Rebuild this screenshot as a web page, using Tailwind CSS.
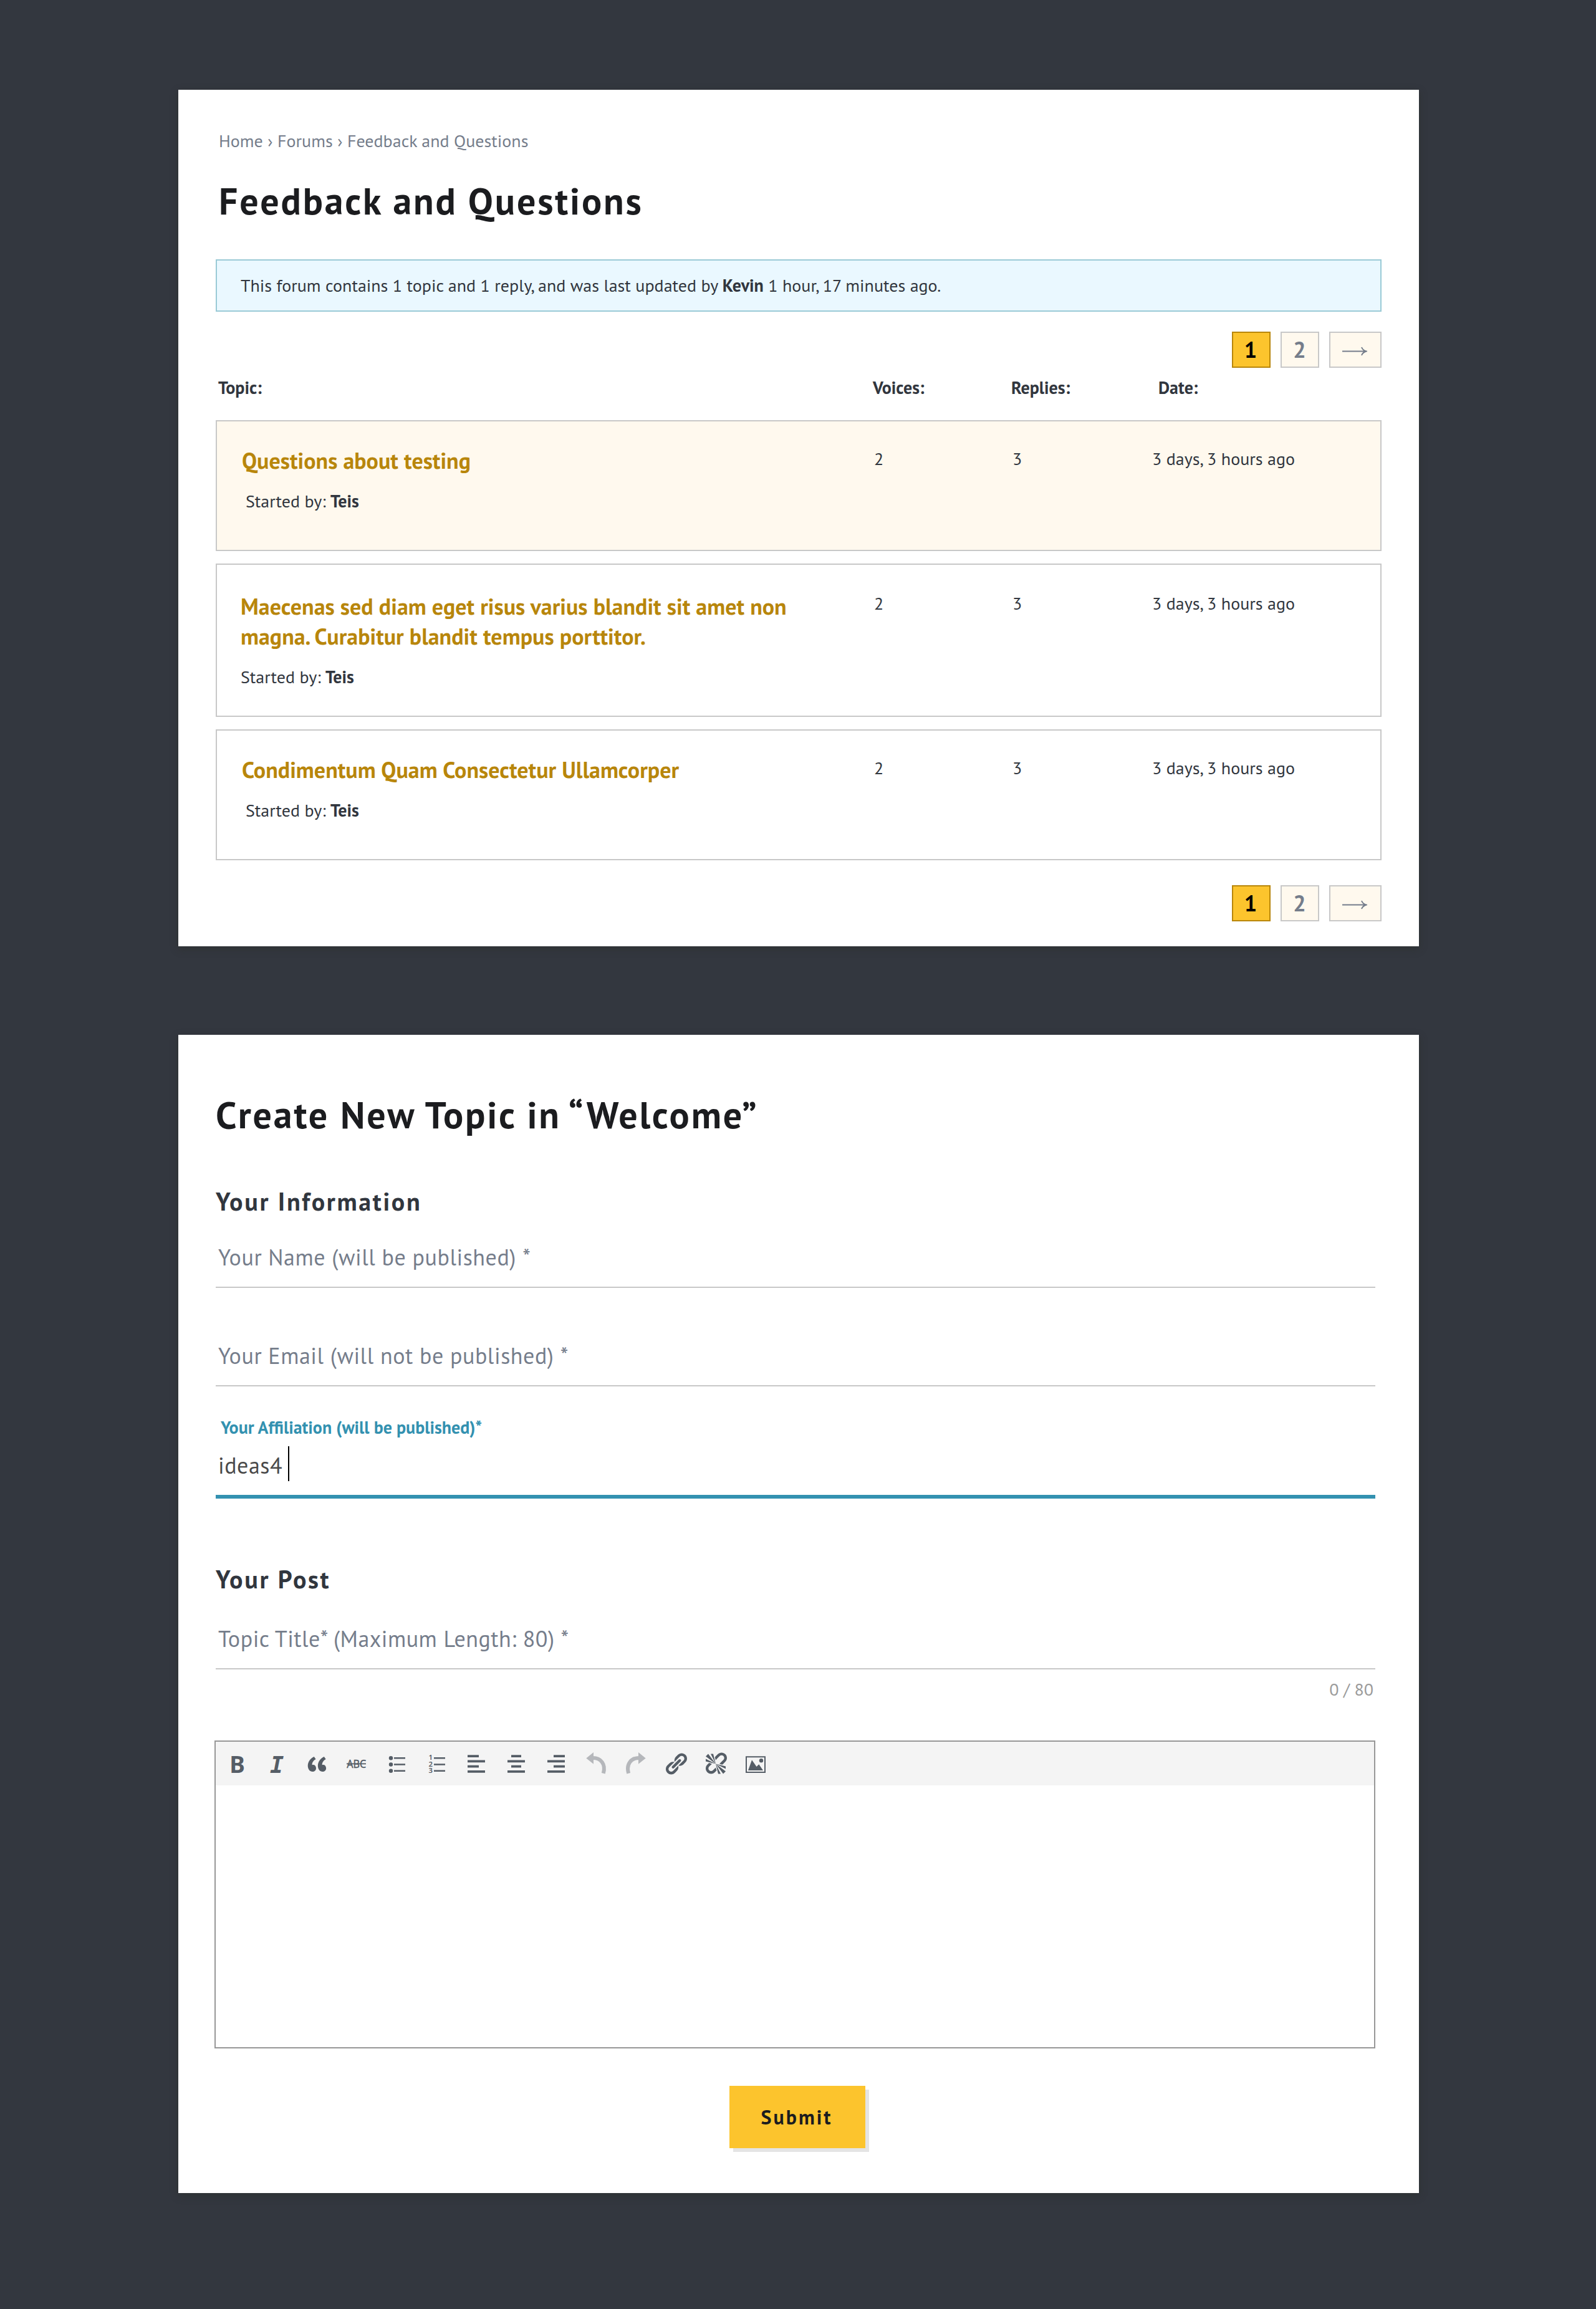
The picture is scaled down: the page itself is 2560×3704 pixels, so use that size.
<!DOCTYPE html>
<html lang="en">
<head>
<meta charset="utf-8">
<title>Feedback and Questions</title>
<script src="https://cdn.jsdelivr.net/npm/@tailwindcss/browser@4"></script>
</head>
<body class="bg-[#33373f] w-[2560px] h-[3704px] pt-36 pl-[286px] font-['PT_Sans','Noto_Sans',sans-serif] text-[28px] leading-10 text-[#31363e]">

<section class="w-[1990px] h-[1374px] bg-white px-[60px] pt-[62px] shadow-[0_4px_12px_rgba(40,44,36,0.4)]">
  <nav class="pl-[5px] text-[#757d8b]">Home › Forums › Feedback and Questions</nav>
  <h1 class="mt-10 pl-[5px] text-[60px] leading-[72px] font-bold tracking-[2.8px] text-[#1b1c1f]">Feedback and Questions</h1>

  <p class="mt-[58px] h-[84px] flex items-center pl-[38px] border-2 border-[#9acad6] bg-[#eaf8ff] whitespace-pre">This forum contains 1 topic and 1 reply, and was last updated by <b>Kevin</b> 1 hour, 17 minutes ago.</p>

  <nav class="mt-8 flex justify-end gap-4 text-[36px] font-bold">
    <span class="w-[62px] h-[58px] pr-[2px] flex items-center justify-center border-2 border-[#b8860b] bg-[#fcc42d] text-black">1</span>
    <span class="w-[62px] h-[58px] pr-px flex items-center justify-center border-2 border-[#c8c8c8] bg-[#fff9ee] text-[#757d8b]">2</span>
    <span class="w-[84px] h-[58px] pr-[2px] flex items-center justify-center border-2 border-[#c8c8c8] bg-[#fff9ee]">
      <svg class="w-10 h-5" viewBox="0 0 40 20" fill="none" stroke="#757d8b" stroke-width="2"><path d="M0 12.500H38M31 6Q33 11 38.500 12.500Q33 14 31 19"/></svg>
    </span>
  </nav>

  <div class="mt-3 pl-1 grid grid-cols-[1050px_222px_236px_1fr] font-bold">
    <span>Topic:</span><span>Voices:</span><span>Replies:</span><span>Date:</span>
  </div>

  <div class="mt-8 flex flex-col gap-5">
    <article class="h-[210px] border-2 border-[#c8c8c8] bg-[#fff9ee] pl-10 grid grid-cols-[1014px_222px_224px_1fr]">
      <div class="pt-[39px]">
        <h2 class="text-[36px] leading-[48px] font-bold text-[#b8860b]">Questions about testing</h2>
        <p class="mt-[21px] pl-[6px]">Started by: <b>Teis</b></p>
      </div>
      <span class="pt-10">2</span><span class="pt-10">3</span><span class="pt-10">3 days, 3 hours ago</span>
    </article>
    <article class="h-[246px] border-2 border-[#c8c8c8] pl-[38px] grid grid-cols-[1016px_222px_224px_1fr]">
      <div class="pt-[43px]">
        <h2 class="text-[36px] leading-[48px] font-bold text-[#b8860b]">Maecenas sed diam eget risus varius blandit sit amet non<br>magna. Curabitur blandit tempus porttitor.</h2>
        <p class="mt-[21px]">Started by: <b>Teis</b></p>
      </div>
      <span class="pt-[42px]">2</span><span class="pt-[42px]">3</span><span class="pt-[42px]">3 days, 3 hours ago</span>
    </article>
    <article class="h-[210px] border-2 border-[#c8c8c8] pl-10 grid grid-cols-[1014px_222px_224px_1fr]">
      <div class="pt-[39px]">
        <h2 class="text-[36px] leading-[48px] font-bold text-[#b8860b]">Condimentum Quam Consectetur Ullamcorper</h2>
        <p class="mt-[21px] pl-[6px]">Started by: <b>Teis</b></p>
      </div>
      <span class="pt-10">2</span><span class="pt-10">3</span><span class="pt-10">3 days, 3 hours ago</span>
    </article>
  </div>

  <nav class="mt-10 flex justify-end gap-4 text-[36px] font-bold">
    <span class="w-[62px] h-[58px] pr-[2px] flex items-center justify-center border-2 border-[#b8860b] bg-[#fcc42d] text-black">1</span>
    <span class="w-[62px] h-[58px] pr-px flex items-center justify-center border-2 border-[#c8c8c8] bg-[#fff9ee] text-[#757d8b]">2</span>
    <span class="w-[84px] h-[58px] pr-[2px] flex items-center justify-center border-2 border-[#c8c8c8] bg-[#fff9ee]">
      <svg class="w-10 h-5" viewBox="0 0 40 20" fill="none" stroke="#757d8b" stroke-width="2"><path d="M0 12.500H38M31 6Q33 11 38.500 12.500Q33 14 31 19"/></svg>
    </span>
  </nav>
</section>

<section class="mt-[142px] w-[1990px] h-[1858px] bg-white pl-[60px] pr-[70px] pt-[92px] shadow-[0_4px_12px_rgba(40,44,36,0.4)]">
  <h1 class="text-[60px] leading-[72px] font-bold tracking-[2.8px] text-[#1b1c1f]">Create New Topic in <span class="-ml-[6px]">“</span>Welcome”</h1>

  <h2 class="mt-[79px] text-[40px] leading-[48px] font-bold tracking-[2.65px]">Your Information</h2>
  <div class="mt-[42px] pl-1 pb-[23px] border-b-2 border-[#c8c8c8] text-[36px] leading-[48px] tracking-[0.55px] text-[#757d8b]">Your Name (will be published) *</div>
  <div class="mt-[85px] pl-1 pb-[23px] border-b-2 border-[#c8c8c8] text-[36px] leading-[48px] tracking-[0.55px] text-[#757d8b]">Your Email (will not be published) *</div>
  <label class="block mt-[46px] pl-2 font-bold text-[#3391b0]">Your Affiliation (will be published)*</label>
  <div class="mt-[17px] pl-1 pb-[23px] border-b-6 border-[#3391b0] relative text-[36px] leading-[48px] tracking-[0.55px] text-[#4a4a4a]">ideas4<i class="absolute left-[116px] -top-[7px] w-[2px] h-14 bg-black"></i></div>

  <h2 class="mt-[105px] text-[40px] leading-[48px] font-bold tracking-[2.65px]">Your Post</h2>
  <div class="mt-[48px] pl-1 pb-[23px] border-b-2 border-[#c8c8c8] text-[36px] leading-[48px] tracking-[0.5px] text-[#757d8b]">Topic Title* (Maximum Length: 80) *</div>
  <p class="mt-3 pr-[3px] text-right text-[#9b9b9b]">0 / 80</p>

  <div class="mt-[62px] -ml-[2px] h-[494px] border-2 border-[#979797]">
    <div class="h-[70px] bg-[#f4f4f4] pl-[14px] pt-4 flex gap-6 text-[#555d66]">
      <svg class="w-10 h-10 overflow-visible" viewBox="0 0 40 40" fill="currentColor"><text x="8.300" y="34.300" font-size="37" font-weight="700" font-family="Noto Sans">B</text></svg>
      <svg class="w-10 h-10 overflow-visible" viewBox="0 0 40 40" fill="currentColor"><text x="9" y="34.300" font-size="37" font-weight="700" font-style="italic" font-family="DejaVu Sans Mono">I</text></svg>
      <svg class="w-10 h-10" viewBox="0 0 20 20" fill="currentColor"><path d="M9.490 13.220c0-.74-.2-1.380-.61-1.900-.62-.78-1.830-.88-2.530-.72-.29-1.650 1.110-3.750 2.920-4.650L7.880 4c-2.730 1.300-5.420 4.280-4.960 8.050C3.210 14.430 4.590 16 6.540 16c.85 0 1.560-.25 2.120-.75s.83-1.180.83-2.030zm8.050 0c0-.74-.2-1.380-.61-1.900-.63-.78-1.830-.88-2.530-.72-.29-1.650 1.110-3.750 2.920-4.650L15.930 4c-2.730 1.300-5.410 4.280-4.950 8.050.28 2.380 1.660 3.950 3.610 3.950.85 0 1.560-.25 2.120-.75s.83-1.180.83-2.030z"/></svg>
      <svg class="w-10 h-10" viewBox="0 0 40 40" fill="currentColor"><text x="4.300" y="25.700" font-size="17.500" textLength="31" lengthAdjust="spacingAndGlyphs" stroke="currentColor" stroke-width=".4" font-family="Noto Sans">ABC</text><path d="M4 18.500h31v1.800H4z"/></svg>
      <svg class="w-10 h-10" viewBox="0 0 40 40" fill="currentColor"><circle cx="11" cy="10.300" r="3.200"/><circle cx="11" cy="20.500" r="3.200"/><circle cx="11" cy="30.700" r="3.200"/><path d="M16 9h18v2.600H16zM16 19.200h18v2.600H16zM16 29.400h18v2.600H16z"/></svg>
      <svg class="w-10 h-10" viewBox="0 0 40 40" fill="currentColor" font-family="Noto Sans" font-weight="600" font-size="11.300"><text x="7.500" y="13.400">1</text><text x="7.500" y="23.800">2</text><text x="7.500" y="34">3</text><path d="M16 9h18v2.600H16zM16 19.200h18v2.600H16zM16 29.400h18v2.600H16z"/></svg>
      <svg class="w-10 h-10" viewBox="0 0 40 40" fill="currentColor"><path d="M6 5.300h18v3.700H6zM6 13.500h28v3.700H6zM6 21.700h18v3.700H6zM6 30h28v3.700H6z"/></svg>
      <svg class="w-10 h-10" viewBox="0 0 40 40" fill="currentColor"><path d="M12 5.300h16v3.700H12zM6 13.500h28v3.700H6zM12 21.700h16v3.700H12zM6 30h28v3.700H6z"/></svg>
      <svg class="w-10 h-10" viewBox="0 0 40 40" fill="currentColor"><path d="M16 5.300h18v3.700H16zM6 13.500h28v3.700H6zM16 21.700h18v3.700H16zM6 30h28v3.700H6z"/></svg>
      <svg class="w-10 h-10 text-[#b5b7bb]" viewBox="0 0 40 40"><path d="M4.300 10.500L16 1V19.700z" fill="currentColor"/><path d="M14 10C28 9.500 36 20 31.800 34.700" fill="none" stroke="currentColor" stroke-width="6"/></svg>
      <svg class="w-10 h-10 text-[#b5b7bb]" viewBox="0 0 40 40"><path d="M35.700 10.500L24 1V19.700z" fill="currentColor"/><path d="M26 10C12 9.500 4 20 8.200 34.700" fill="none" stroke="currentColor" stroke-width="6"/></svg>
      <svg class="w-10 h-10" viewBox="0 0 20 20" fill="currentColor"><path d="M17.740 2.260c1.680 1.690 1.680 4.410 0 6.100l-1.530 1.520c-1.120 1.120-2.700 1.470-4.140 1.090l2.620-2.610.76-.77.76-.76c.84-.84.84-2.200 0-3.040-.84-.85-2.200-.85-3.040 0l-.77.76-3.380 3.380c-.37-1.440-.02-3.020 1.100-4.140l1.520-1.530c1.690-1.680 4.420-1.680 6.100 0zM8.590 12.930l5.340-5.340c.42-.42.42-1.100 0-1.520-.44-.43-1.130-.39-1.530 0l-5.330 5.340c-.42.42-.42 1.100 0 1.520.44.43 1.130.39 1.520 0zm-.76 2.290l4.140-4.150c.38 1.440.03 3.020-1.090 4.140l-1.520 1.530c-1.690 1.680-4.410 1.680-6.100 0-1.680-1.680-1.680-4.420 0-6.100l1.530-1.520c1.120-1.120 2.700-1.470 4.140-1.100l-4.140 4.150c-.85.84-.85 2.200 0 3.050.84.84 2.200.84 3.040 0z" transform="translate(0 .2)"/></svg>
      <svg class="w-10 h-10" viewBox="0 0 20 20" fill="currentColor"><path d="M17.740 2.260c1.680 1.690 1.680 4.410 0 6.100l-1.530 1.520c-.32.33-.69.58-1.080.77L13 10l1.690-1.640.76-.77.76-.76c.84-.84.84-2.200 0-3.040-.84-.85-2.200-.85-3.040 0l-.77.76-.76.76L10 7l-.65-2.140c.19-.38.44-.75.77-1.070l1.520-1.530c1.690-1.680 4.420-1.680 6.100 0zM2 4l8 6-6-8zm4-2l4 8-2-8H6zM2 6l8 4-8-2V6zm7.360 7.690L10 13l.74 2.350-1.380 1.390c-1.690 1.680-4.410 1.680-6.100 0-1.680-1.680-1.680-4.420 0-6.100l1.390-1.380L7 10l-.69.640-1.520 1.530c-.85.84-.85 2.200 0 3.040.84.85 2.200.85 3.040 0zM18 16l-8-6 6 8zm-4 2l-4-8 2 8h2zm4-4l-8-4 8 2v2z" transform="translate(0 -.3)"/></svg>
      <svg class="w-10 h-10" viewBox="0 0 40 40" fill="currentColor"><path d="M5 8.300h30v24.700H5z" fill="none" stroke="currentColor" stroke-width="2"/><path d="M8 30L14 13.300 21.500 24 25.300 20.300 32 30z"/><circle cx="29" cy="14.300" r="3.200"/></svg>
    </div>
  </div>

  <button class="block mt-[60px] ml-[824px] w-[218px] h-[100px] pr-[2px] bg-[#fcc42d] shadow-[6px_6px_0_#e4e4e4] text-[32px] font-bold tracking-[3px] text-[#1b1c1f]">Submit</button>
</section>
</body>
</html>
